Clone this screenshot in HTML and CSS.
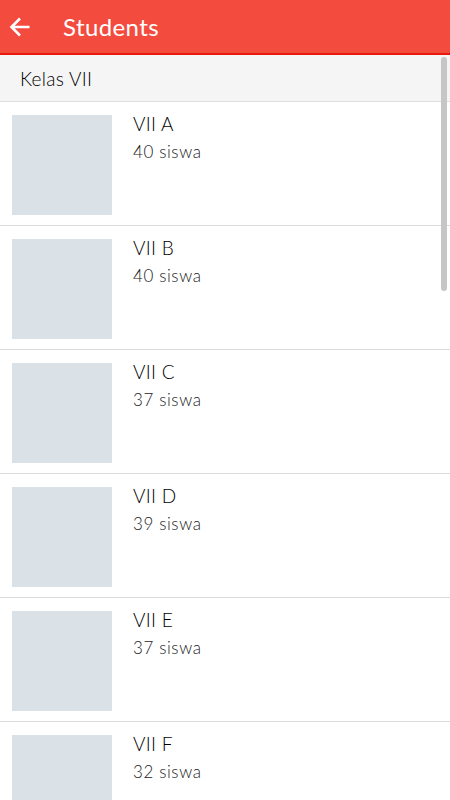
FILE: index.html
```html
<!DOCTYPE html>
<html>
<head>
<meta charset="utf-8">
<link rel="stylesheet" href="styles.css">
</head>
<body>
<div class="app">
  <header class="appbar">
    <svg class="back" width="22" height="22" viewBox="0 0 22 22"><path d="M20.5 11H2.5M11 2.5L2.5 11l8.5 8.5" fill="none" stroke="#fff" stroke-width="2.6"/></svg>
    <h1 class="title">Students</h1>
  </header>
  <div class="list">
    <div class="section">Kelas VII</div>
    <div class="row"><div class="thumb"></div><div class="info"><div class="name">VII A</div><div class="count">40 siswa</div></div></div>
    <div class="row"><div class="thumb"></div><div class="info"><div class="name">VII B</div><div class="count">40 siswa</div></div></div>
    <div class="row"><div class="thumb"></div><div class="info"><div class="name">VII C</div><div class="count">37 siswa</div></div></div>
    <div class="row"><div class="thumb"></div><div class="info"><div class="name">VII D</div><div class="count">39 siswa</div></div></div>
    <div class="row"><div class="thumb"></div><div class="info"><div class="name">VII E</div><div class="count">37 siswa</div></div></div>
    <div class="row"><div class="thumb"></div><div class="info"><div class="name">VII F</div><div class="count">32 siswa</div></div></div>
    <div class="scrollbar"></div>
  </div>
</div>
</body>
</html>
```

FILE: styles.css
```css
html, body {
  margin: 0;
  padding: 0;
  height: 100%;
  overflow: hidden;
  background: #fff;
}
.app {
  font-family: "Lato", "Open Sans", sans-serif;
  width: 450px;
  height: 800px;
  display: flex;
  flex-direction: column;
}
.appbar {
  height: 55px;
  background: #f44b3f;
  border-bottom: 2px solid #e8190f;
  display: flex;
  align-items: center;
  box-sizing: border-box;
  flex-shrink: 0;
}
.back {
  margin-left: 9px;
  margin-top: 1px;
}
.title {
  margin: 0 0 0 32px;
  color: #fff;
  font-weight: 400;
  font-size: 24px;
  letter-spacing: 0.4px;
}
.list {
  position: relative;
  flex: 1;
  overflow: hidden;
}
.section {
  height: 46px;
  background: #f5f5f5;
  border-bottom: 1px solid #dedede;
  display: flex;
  align-items: center;
  padding-left: 20px;
  font-size: 19px;
  font-weight: 300;
  letter-spacing: 0.3px;
  color: #000;
}
.row {
  height: 110px;
  border-bottom: 1px solid #dcdcdc;
  display: flex;
  padding: 13px 0 0 12px;
}
.thumb {
  width: 100px;
  height: 100px;
  background: #dae1e7;
  flex-shrink: 0;
}
.info {
  margin-left: 21px;
  margin-top: -3px;
}
.name {
  font-size: 19px;
  font-weight: 300;
  color: #000;
  line-height: 24px;
  letter-spacing: 0.3px;
}
.count {
  font-size: 17px;
  font-weight: 300;
  color: #1a1a1a;
  line-height: 24px;
  margin-top: 4px;
  letter-spacing: 0.6px;
}
.scrollbar {
  position: absolute;
  top: 2px;
  right: 3px;
  width: 6px;
  height: 234px;
  border-radius: 3px;
  background: #c6c6c6;
}
```
